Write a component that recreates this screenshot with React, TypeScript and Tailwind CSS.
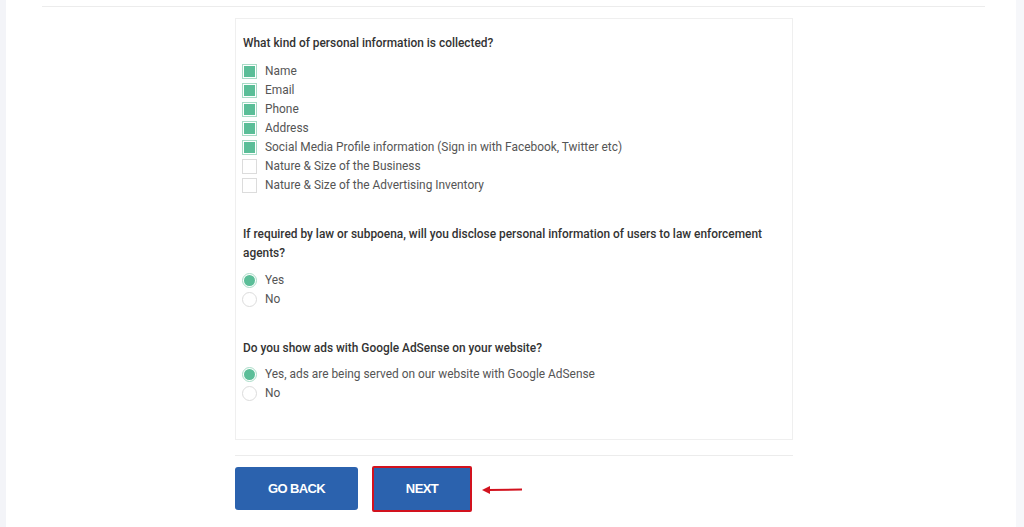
import React from "react";

const font = { fontFamily: "Roboto, 'Noto Sans', sans-serif" };
const btnFont = { fontFamily: "'Liberation Sans', Arial, sans-serif" };

function Check({ checked, label }: { checked: boolean; label: string }) {
  return (
    <div className="flex items-center h-[19px]">
      <span
        className={
          "w-[15px] h-[15px] ml-[-1px] flex items-center justify-center border " +
          (checked ? "border-[#a9dcc7] bg-white" : "border-[#dcdcdc] bg-white")
        }
      >
        {checked && <span className="w-[11px] h-[11px] bg-[#5bbe98]" />}
      </span>
      <span className="ml-[8px] text-[11.9px] text-[#555]">{label}</span>
    </div>
  );
}

function Radio({ checked, label }: { checked: boolean; label: string }) {
  return (
    <div className="flex items-center h-[19px]">
      <span
        className={
          "w-[15px] h-[15px] ml-[-1px] rounded-full flex items-center justify-center border " +
          (checked ? "border-[#a9dcc7] bg-white" : "border-[#dcdcdc] bg-white")
        }
      >
        {checked && <span className="w-[11px] h-[11px] rounded-full bg-[#5bbe98]" />}
      </span>
      <span className="ml-[8px] text-[11.9px] text-[#555]">{label}</span>
    </div>
  );
}

export default function App() {
  return (
    <div className="w-[1024px] h-[527px] flex bg-white overflow-hidden" style={font}>
      <div className="w-[6px] bg-[#f3f4f8]" />
      <div className="flex-1 flex flex-col">
        <div className="ml-[36px] w-[943px] h-[7px] border-b border-[#ececec]" />
        <div className="ml-[229px] mt-[11px] w-[558px] border border-[#efefef] pl-[7px] pt-[15px] pb-[36px]">
          <div className="text-[11.9px] leading-[19px] font-medium text-[#333]">
            What kind of personal information is collected?
          </div>
          <div className="mt-[9px]">
            <Check checked label="Name" />
            <Check checked label="Email" />
            <Check checked label="Phone" />
            <Check checked label="Address" />
            <Check checked label="Social Media Profile information (Sign in with Facebook, Twitter etc)" />
            <Check checked={false} label="Nature & Size of the Business" />
            <Check checked={false} label="Nature & Size of the Advertising Inventory" />
          </div>
          <div className="mt-[30px] text-[11.9px] leading-[19px] font-medium text-[#333] pr-[20px]">
            If required by law or subpoena, will you disclose personal information of users to law enforcement agents?
          </div>
          <div className="mt-[8px]">
            <Radio checked label="Yes" />
            <Radio checked={false} label="No" />
          </div>
          <div className="mt-[30px] text-[11.9px] leading-[19px] font-medium text-[#333]">
            Do you show ads with Google AdSense on your website?
          </div>
          <div className="mt-[7px]">
            <Radio checked label="Yes, ads are being served on our website with Google AdSense" />
            <Radio checked={false} label="No" />
          </div>
        </div>
        <div className="ml-[229px] mt-[15px] w-[558px] h-px bg-[#ececec]" />
        <div className="ml-[229px] mt-[10px] flex items-start">
          <button
            className="mt-[1px] w-[123px] h-[43px] rounded-[3px] bg-[#2b62ae] text-white text-[13px] font-bold tracking-[-0.6px]"
            style={btnFont}
          >
            GO BACK
          </button>
          <div className="ml-[14px] w-[100px] h-[46px] border-[2px] border-[#d2121e] rounded-[2px] bg-[#2b62ae] flex items-center justify-center">
            <span className="text-white text-[13px] font-bold tracking-[-0.6px]" style={btnFont}>
              NEXT
            </span>
          </div>
          <svg className="ml-[10px] mt-[19px]" width="42" height="10" viewBox="0 0 42 10">
            <line x1="6" y1="5" x2="40" y2="4.5" stroke="#d2121e" strokeWidth="2" />
            <polygon points="0,5 8,1 8,9" fill="#d2121e" />
          </svg>
        </div>
      </div>
      <div className="w-[8px] bg-[#f6f7fa]" />
    </div>
  );
}
